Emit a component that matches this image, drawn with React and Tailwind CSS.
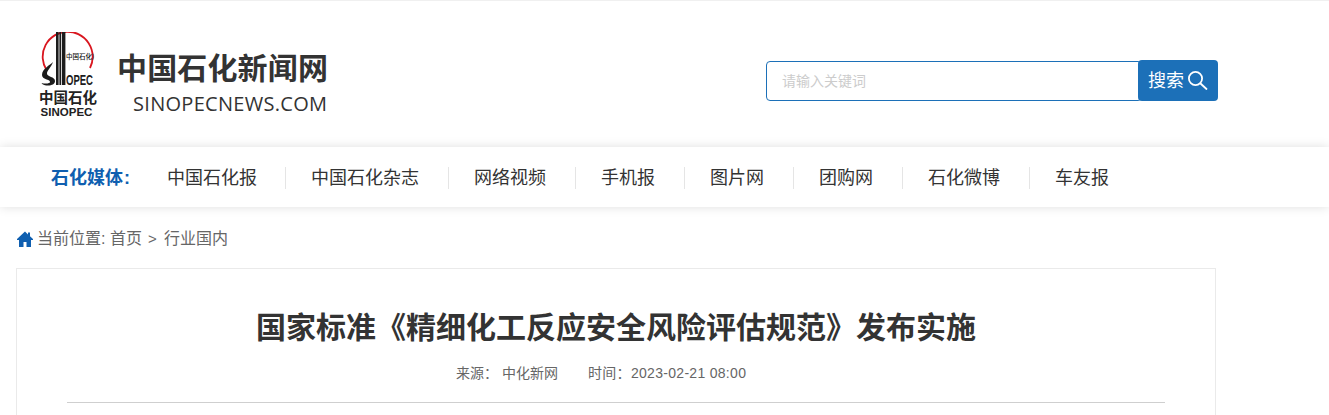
const cjk = "font-['Liberation_Sans','Noto_Sans_CJK_SC',sans-serif]";

function Logo() {
  return (
    <div className="relative w-[60px] h-[86px] shrink-0">
      <svg width="60" height="56" viewBox="0 0 60 56" className="absolute left-0 top-0">
        <path d="M8.500 38A25 25 0 1 1 52 36" fill="none" stroke="#d9161f" strokeWidth="1.800" />
        <path d="M18 0h2.600v53H18zM21.400 0h1.800v53h-1.800zM24 0h3.400v53H24z" fill="#1c1c1c" />
        <path d="M15 30c-3 3-11 7-11 13 0 5 8 4 8 7 0 1.500-4 2-8.500 1 1 2 4 2.500 6.500 2.500 4 0 7-1.500 7-4.500 0-4.500-8-4-8-7.500 0-3 4-6 6-11.500z" fill="#1c1c1c" />
      </svg>
      <span className="absolute left-[28px] top-[20px] text-[6.500px] leading-[9px] text-[#111] font-medium whitespace-nowrap font-['Noto_Sans_CJK_SC',sans-serif]">中国石化)</span>
      <span className="absolute left-[28px] top-[40px] text-[14px] leading-[16px] font-bold text-[#1c1c1c] scale-x-[0.68] origin-left font-['Liberation_Sans',sans-serif]">OPEC</span>
      <span className="absolute left-0 top-[56px] w-[60px] text-center text-[14.500px] leading-[17px] font-bold text-[#222] whitespace-nowrap font-['Noto_Sans_CJK_SC',sans-serif]">中国石化</span>
      <span className="absolute left-0 top-[74px] w-[57px] text-center text-[11.500px] leading-[13px] font-bold text-[#222] font-['Liberation_Sans',sans-serif]">SINOPEC</span>
    </div>
  );
}

const nav = [
  ["中国石化报", "w-[119px]"],
  ["中国石化杂志", "w-[138px]"],
  ["网络视频", "w-[102px]"],
  ["手机报", "w-[84px]"],
  ["图片网", "w-[84px]"],
  ["团购网", "w-[84px]"],
  ["石化微博", "w-[102px]"],
];

export default function App() {
  return (
    <div className={`w-[1329px] h-[415px] overflow-hidden bg-white ${cjk}`}>
      <header className="h-[147px] border-t border-[#f0f0f0] flex items-start">
        <div className="ml-[38px] mt-[31px]"><Logo /></div>
        <div className="ml-[20px] mt-[47px] w-[210px]">
          <div className="text-[30px] leading-[42px] font-bold text-[#333] whitespace-nowrap -ml-px tracking-[0.15px]">中国石化新闻网</div>
          <div className="ml-[15px] mt-[2px] text-[20px] leading-[24px] text-[#333] whitespace-nowrap tracking-[0.3px] font-['Open_Sans',sans-serif]">SINOPECNEWS.COM</div>
        </div>
        <div className="ml-[438px] mt-[59px] flex items-start w-[452px]">
          <div className="w-[376px] h-[40px] mt-[1px] border border-[#1c70b8] rounded-[4px] pl-[15px] flex items-center text-[14px] text-[#cccccc] -mr-[4px]">请输入关键词</div>
          <div className="w-[80px] h-[41px] bg-[#1c70b8] rounded-[4px] flex items-center pl-[10px] pt-[1px] text-white text-[18px] gap-[3px]">
            <span className="whitespace-nowrap">搜索</span>
            <svg width="21" height="21" viewBox="0 0 21 21" fill="none" stroke="white" strokeWidth="1.800" strokeLinecap="round" className="-mt-[2px]">
              <circle cx="8.500" cy="8.500" r="6.600" />
              <path d="M13.500 13.500l6 5.500" />
            </svg>
          </div>
        </div>
      </header>
      <nav className="h-[60px] bg-white shadow-[0_0_10px_rgba(0,0,0,0.13)] flex items-center pl-[51px] pt-[2px] relative">
        <div className="w-[115px] mr-px text-[18px] font-bold text-[#0f5fb0] whitespace-nowrap">石化媒体<span className="ml-[1px]">:</span></div>
        {nav.map(([t, w]) => (
          <div key={t} className={`${w} h-[22px] border-r border-[#e5e5e5] mr-[25px] flex items-center text-[18px] text-[#333] whitespace-nowrap`}>{t}</div>
        ))}
        <div className="text-[18px] text-[#333] whitespace-nowrap">车友报</div>
      </nav>
      <div className="h-[61px] pl-[17px] pt-[22px] flex items-start text-[16px] leading-[20px] text-[#666]">
        <svg width="16" height="16" viewBox="0 0 16 16" className="mt-[2px] mr-[4px]" fill="#0f5fb0">
          <path d="M8 .5L0 8v1h2v7h4.500v-5h3v5H14V9h2V8l-3-2.800V1.500h-2v1.900z" />
        </svg>
        <span className="whitespace-nowrap">当前位置: 首页</span>
        <span className="ml-[6px] mr-[6px] w-[10px] text-[15px]">&gt;</span>
        <span className="whitespace-nowrap">行业国内</span>
      </div>
      <main className="ml-[16px] w-[1200px] border border-[#eaeaea] h-[300px] px-[50px] pt-[38px]">
        <h1 className="text-center text-[30px] leading-[42px] font-bold text-[#333] whitespace-nowrap">国家标准《精细化工反应安全风险评估规范》发布实施</h1>
        <div className="mt-[14px] ml-[389px] flex text-[14px] leading-[20px] text-[#666]">
          <span className="whitespace-nowrap w-[46px]">来源：</span>
          <span className="whitespace-nowrap">中化新网</span>
          <span className="ml-[30px] whitespace-nowrap tracking-[0.3px]">时间：2023-02-21 08:00</span>
        </div>
        <div className="mt-[19px] border-t border-[#cfcfcf]" />
      </main>
    </div>
  );
}
